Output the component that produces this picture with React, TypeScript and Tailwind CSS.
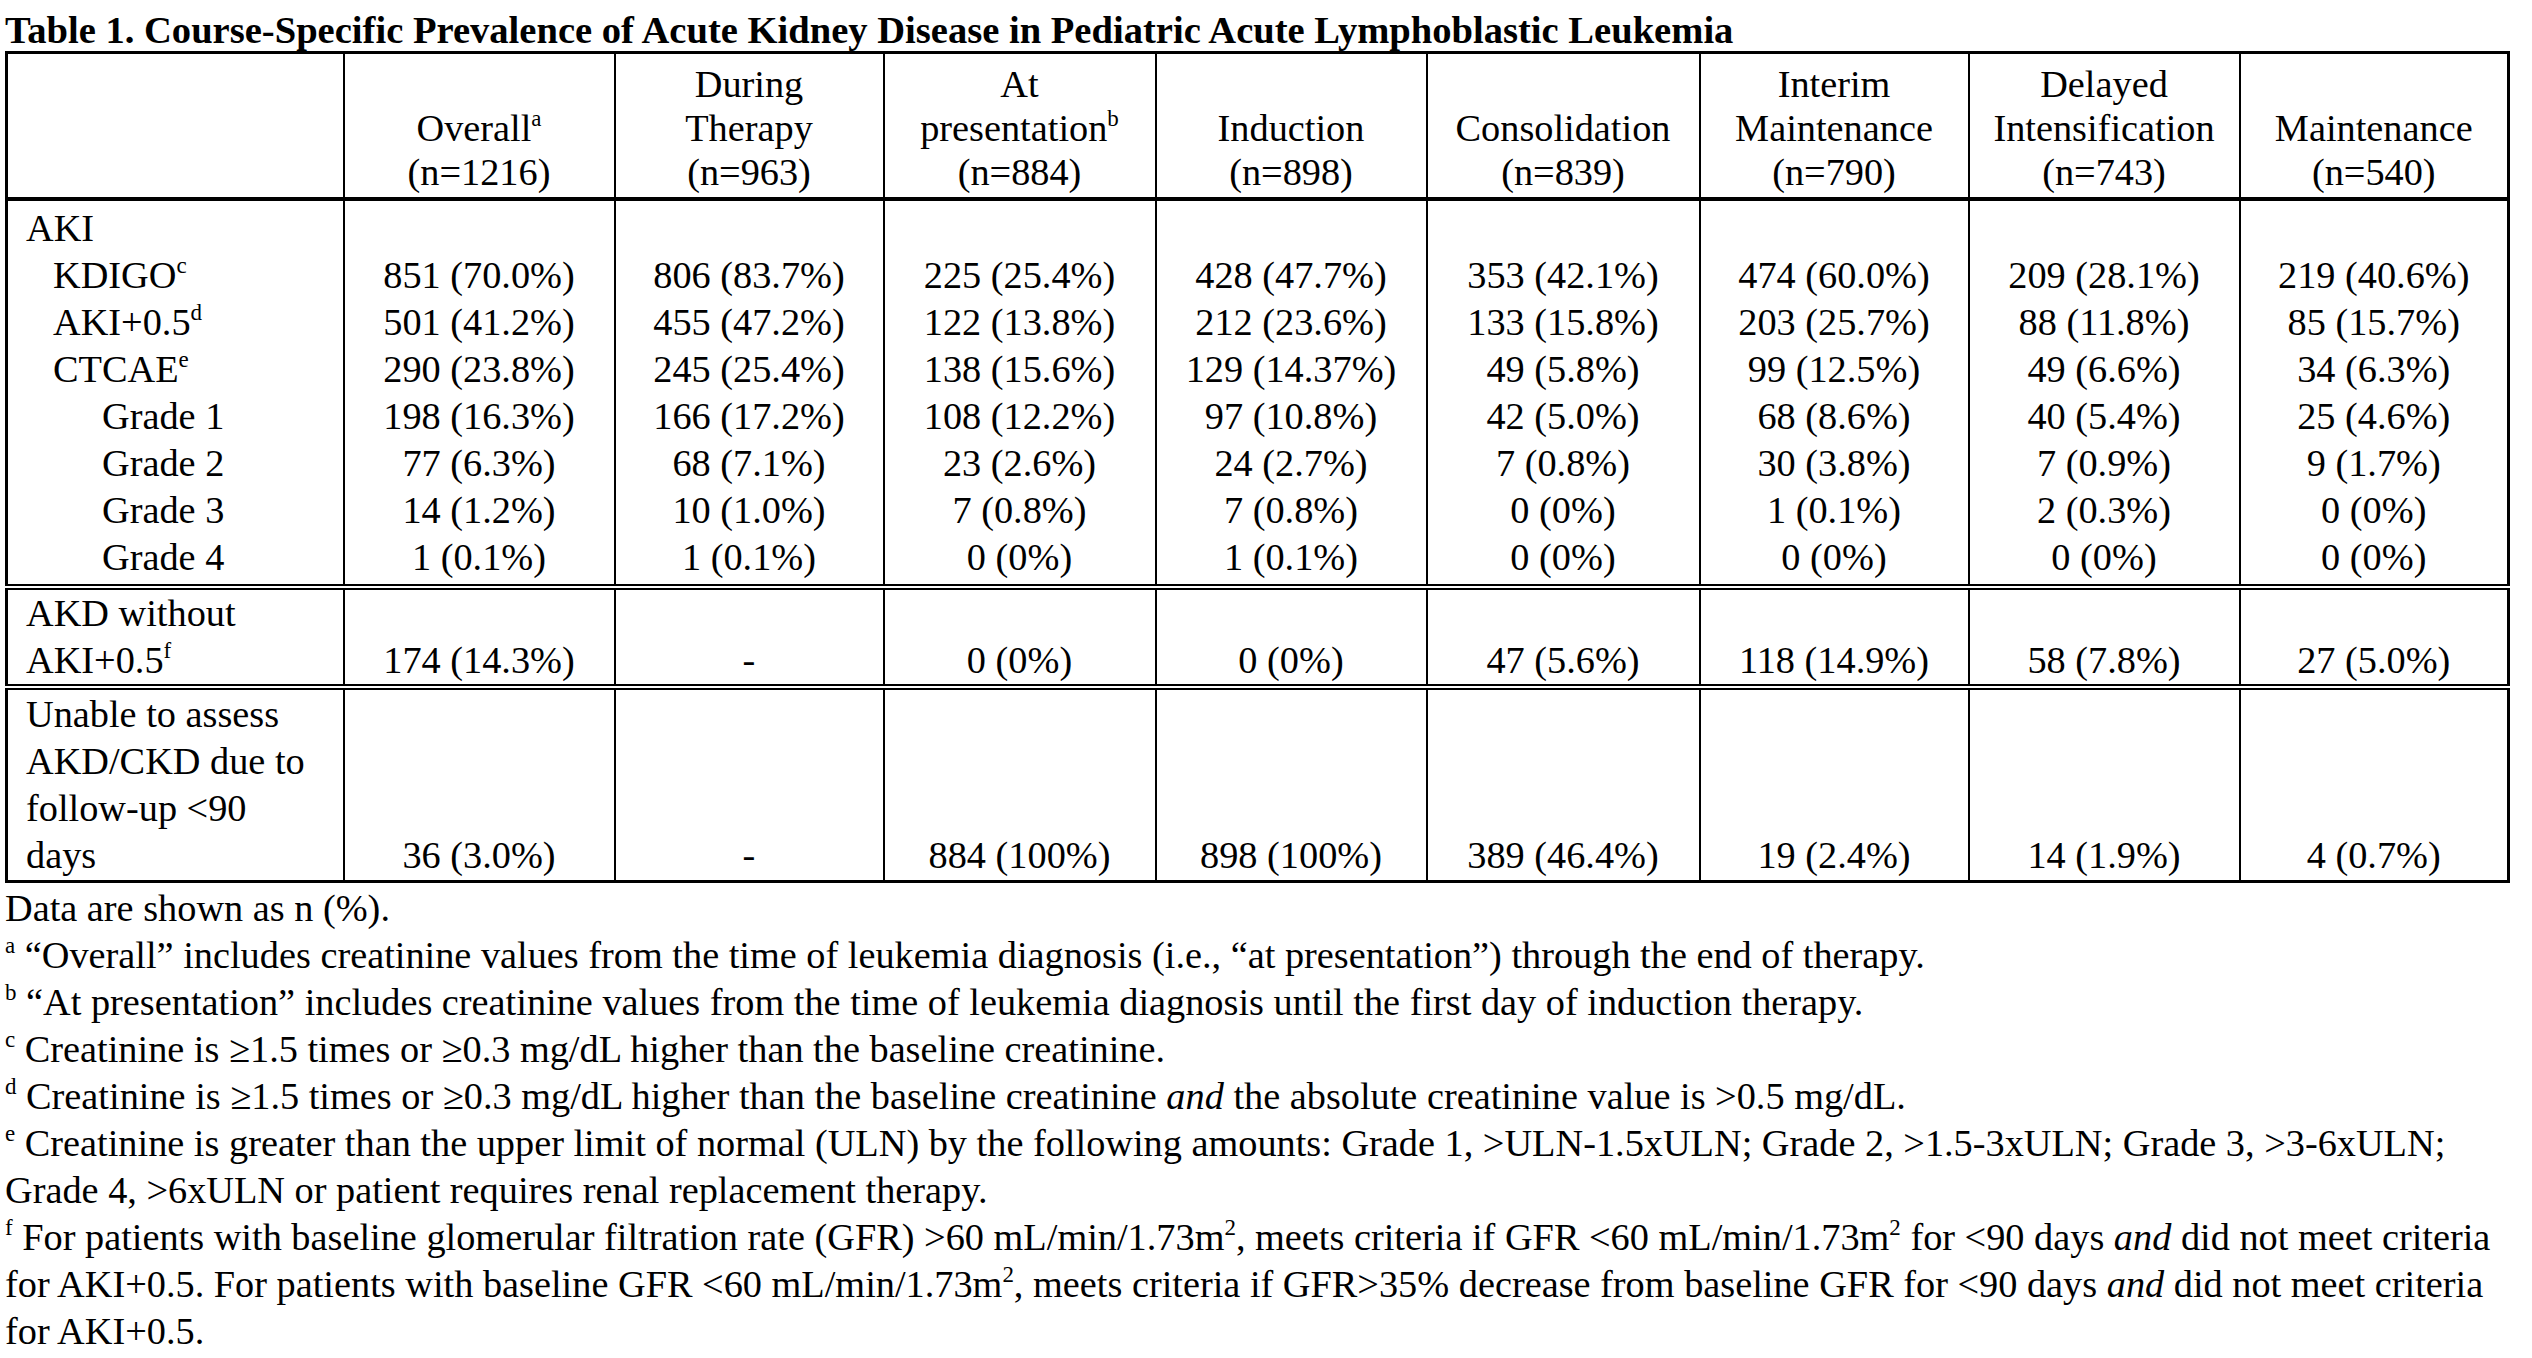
import React from "react"

const Sup = ({ children }: { children: React.ReactNode }) => (
  <sup className="text-[0.6em] -top-[0.65em]">{children}</sup>
)

type Col = { w: string; head: React.ReactNode[]; aki: string[]; akd: string; unable: string }

const cols: Col[] = [
  {
    w: "w-[271px]",
    head: [<>Overall<Sup>a</Sup></>, "(n=1216)"],
    aki: ["851 (70.0%)", "501 (41.2%)", "290 (23.8%)", "198 (16.3%)", "77 (6.3%)", "14 (1.2%)", "1 (0.1%)"],
    akd: "174 (14.3%)",
    unable: "36 (3.0%)",
  },
  {
    w: "w-[269px]",
    head: ["During", "Therapy", "(n=963)"],
    aki: ["806 (83.7%)", "455 (47.2%)", "245 (25.4%)", "166 (17.2%)", "68 (7.1%)", "10 (1.0%)", "1 (0.1%)"],
    akd: "-",
    unable: "-",
  },
  {
    w: "w-[272px]",
    head: ["At", <>presentation<Sup>b</Sup></>, "(n=884)"],
    aki: ["225 (25.4%)", "122 (13.8%)", "138 (15.6%)", "108 (12.2%)", "23 (2.6%)", "7 (0.8%)", "0 (0%)"],
    akd: "0 (0%)",
    unable: "884 (100%)",
  },
  {
    w: "w-[271px]",
    head: ["Induction", "(n=898)"],
    aki: ["428 (47.7%)", "212 (23.6%)", "129 (14.37%)", "97 (10.8%)", "24 (2.7%)", "7 (0.8%)", "1 (0.1%)"],
    akd: "0 (0%)",
    unable: "898 (100%)",
  },
  {
    w: "w-[273px]",
    head: ["Consolidation", "(n=839)"],
    aki: ["353 (42.1%)", "133 (15.8%)", "49 (5.8%)", "42 (5.0%)", "7 (0.8%)", "0 (0%)", "0 (0%)"],
    akd: "47 (5.6%)",
    unable: "389 (46.4%)",
  },
  {
    w: "w-[269px]",
    head: ["Interim", "Maintenance", "(n=790)"],
    aki: ["474 (60.0%)", "203 (25.7%)", "99 (12.5%)", "68 (8.6%)", "30 (3.8%)", "1 (0.1%)", "0 (0%)"],
    akd: "118 (14.9%)",
    unable: "19 (2.4%)",
  },
  {
    w: "w-[271px]",
    head: ["Delayed", "Intensification", "(n=743)"],
    aki: ["209 (28.1%)", "88 (11.8%)", "49 (6.6%)", "40 (5.4%)", "7 (0.9%)", "2 (0.3%)", "0 (0%)"],
    akd: "58 (7.8%)",
    unable: "14 (1.9%)",
  },
  {
    w: "w-[269px]",
    head: ["Maintenance", "(n=540)"],
    aki: ["219 (40.6%)", "85 (15.7%)", "34 (6.3%)", "25 (4.6%)", "9 (1.7%)", "0 (0%)", "0 (0%)"],
    akd: "27 (5.0%)",
    unable: "4 (0.7%)",
  },
]

const labels: { text: React.ReactNode; indent: string }[] = [
  { text: "AKI", indent: "pl-[18px]" },
  { text: <>KDIGO<Sup>c</Sup></>, indent: "pl-[45px]" },
  { text: <>AKI+0.5<Sup>d</Sup></>, indent: "pl-[45px]" },
  { text: <>CTCAE<Sup>e</Sup></>, indent: "pl-[45px]" },
  { text: "Grade 1", indent: "pl-[94px]" },
  { text: "Grade 2", indent: "pl-[94px]" },
  { text: "Grade 3", indent: "pl-[94px]" },
  { text: "Grade 4", indent: "pl-[94px]" },
]

const Line = ({ children, className = "" }: { children: React.ReactNode; className?: string }) => (
  <div className={"h-[47px] leading-[47px] whitespace-nowrap " + className}>{children}</div>
)

export default function App() {
  return (
    <div className="min-h-screen bg-white text-black font-['Liberation_Serif','Times_New_Roman',serif] text-[38.3px] pl-[5px]">
      <h1 className="mt-[9px] text-[38.6px] font-bold leading-[42px] whitespace-nowrap">
        Table 1. Course-Specific Prevalence of Acute Kidney Disease in Pediatric Acute Lymphoblastic Leukemia
      </h1>

      <table className="table-fixed border-collapse border-[3px] border-black">
        <colgroup>
          <col className="w-[337px]" />
          {cols.map((c, i) => (
            <col key={i} className={c.w} />
          ))}
        </colgroup>
        <thead>
          <tr className="border-b-4 border-black">
            <th className="border-r-2 border-black h-[146px]" />
            {cols.map((c, i) => (
              <th key={i} className="border-x-2 border-black align-bottom font-normal text-center pb-[3px]">
                {c.head.map((h, j) => (
                  <div key={j} className="leading-[44px] whitespace-nowrap">
                    {h}
                  </div>
                ))}
              </th>
            ))}
          </tr>
        </thead>
        <tbody>
          <tr>
            <td className="border-r-2 border-black align-top pt-[4px] pb-[3px]">
              {labels.map((l, i) => (
                <Line key={i} className={l.indent}>
                  {l.text}
                </Line>
              ))}
            </td>
            {cols.map((c, i) => (
              <td key={i} className="border-x-2 border-black align-top text-center pt-[4px] pb-[3px]">
                <Line>{""}</Line>
                {c.aki.map((v, j) => (
                  <Line key={j}>{v}</Line>
                ))}
              </td>
            ))}
          </tr>
          <tr className="border-t-[6px] border-double border-black">
            <td className="border-r-2 border-black align-top pl-[18px]">
              <Line>AKD without</Line>
              <Line>
                AKI+0.5<Sup>f</Sup>
              </Line>
            </td>
            {cols.map((c, i) => (
              <td key={i} className="border-x-2 border-black align-bottom text-center">
                <Line>{c.akd}</Line>
              </td>
            ))}
          </tr>
          <tr className="border-t-[6px] border-double border-black">
            <td className="border-r-2 border-black align-top pl-[18px] pt-[1px] pb-[1px]">
              <Line>Unable to assess</Line>
              <Line>AKD/CKD due to</Line>
              <Line>follow-up &lt;90</Line>
              <Line>days</Line>
            </td>
            {cols.map((c, i) => (
              <td key={i} className="border-x-2 border-black align-bottom text-center pb-[1px]">
                <Line>{c.unable}</Line>
              </td>
            ))}
          </tr>
        </tbody>
      </table>

      <div className="pt-[2px]">
        <Line>Data are shown as n (%).</Line>
        <Line>
          <Sup>a</Sup> “Overall” includes creatinine values from the time of leukemia diagnosis (i.e., “at presentation”)
          through the end of therapy.
        </Line>
        <Line>
          <Sup>b</Sup> “At presentation” includes creatinine values from the time of leukemia diagnosis until the first
          day of induction therapy.
        </Line>
        <Line>
          <Sup>c</Sup> Creatinine is ≥1.5 times or ≥0.3 mg/dL higher than the baseline creatinine.
        </Line>
        <Line>
          <Sup>d</Sup> Creatinine is ≥1.5 times or ≥0.3 mg/dL higher than the baseline creatinine <i>and</i> the
          absolute creatinine value is &gt;0.5 mg/dL.
        </Line>
        <Line>
          <Sup>e</Sup> Creatinine is greater than the upper limit of normal (ULN) by the following amounts: Grade 1,
          &gt;ULN-1.5xULN; Grade 2, &gt;1.5-3xULN; Grade 3, &gt;3-6xULN;
        </Line>
        <Line>Grade 4, &gt;6xULN or patient requires renal replacement therapy.</Line>
        <Line>
          <Sup>f</Sup> For patients with baseline glomerular filtration rate (GFR) &gt;60 mL/min/1.73m<Sup>2</Sup>,
          meets criteria if GFR &lt;60 mL/min/1.73m<Sup>2</Sup> for &lt;90 days <i>and</i> did not meet criteria
        </Line>
        <Line>
          for AKI+0.5. For patients with baseline GFR &lt;60 mL/min/1.73m<Sup>2</Sup>, meets criteria if GFR&gt;35%
          decrease from baseline GFR for &lt;90 days <i>and</i> did not meet criteria
        </Line>
        <Line>for AKI+0.5.</Line>
      </div>
    </div>
  )
}
